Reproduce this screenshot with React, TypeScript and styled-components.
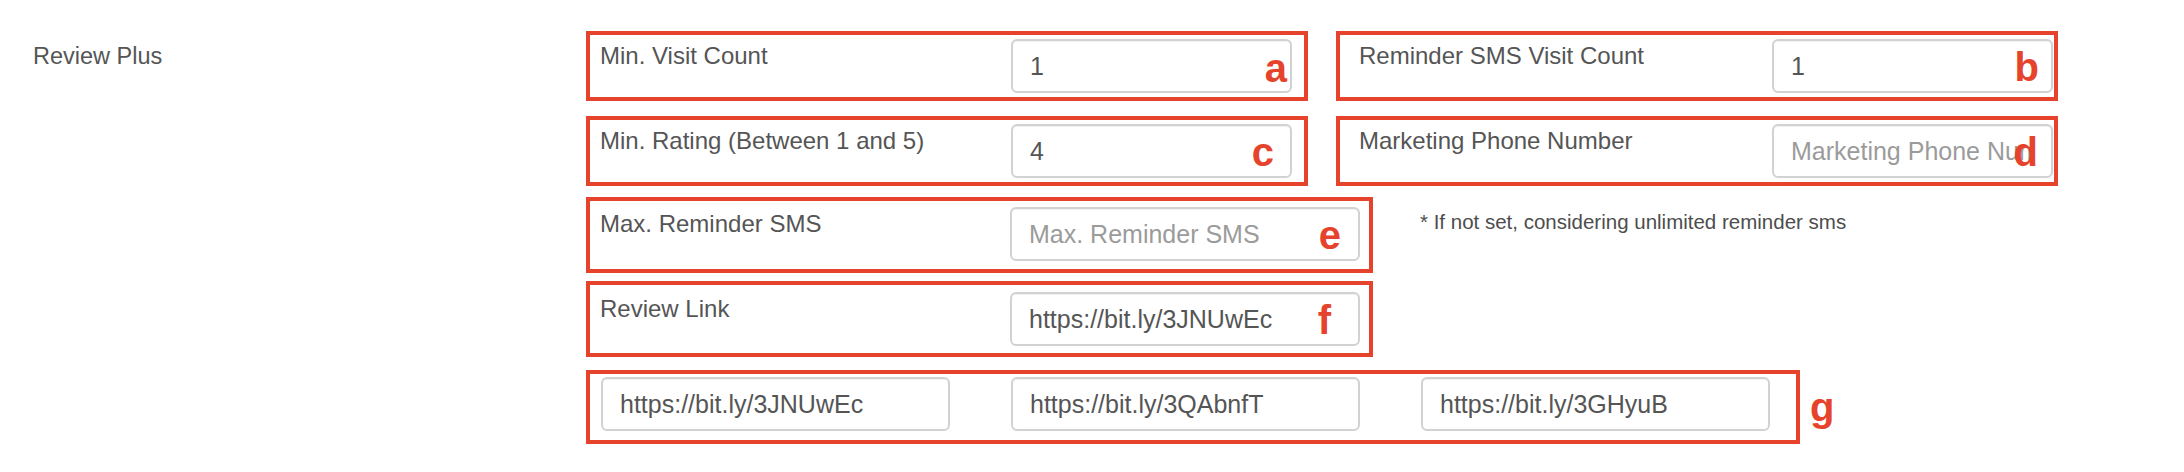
import React from "react";
import styled, { createGlobalStyle } from "styled-components";

const RED = "#e6432c";

const GlobalStyle = createGlobalStyle`
  html, body {
    margin: 0;
    padding: 0;
    background: #fff;
  }
  body {
    font-family: "Liberation Sans", Arial, Helvetica, sans-serif;
    color: #555;
  }
  * {
    box-sizing: border-box;
  }
`;

const Page = styled.div`
  display: flex;
  align-items: flex-start;
  width: 2184px;
  height: 472px;
`;

const SectionTitle = styled.div`
  width: 586px;
  flex-shrink: 0;
  padding: 42px 0 0 33px;
  font-size: 23.5px;
  line-height: 28px;
  color: #555;
`;

const Fields = styled.div`
  display: flex;
  flex-direction: column;
  padding-top: 31px;
`;

const Row = styled.div<{ $mt?: number }>`
  display: flex;
  align-items: flex-start;
  gap: 28px;
  margin-top: ${(p) => p.$mt ?? 0}px;
`;

/* red annotation frame round a form group */
const Box = styled.div<{ $w: number; $h: number; $pad: string }>`
  position: relative;
  display: flex;
  align-items: flex-start;
  flex-shrink: 0;
  width: ${(p) => p.$w}px;
  height: ${(p) => p.$h}px;
  padding: ${(p) => p.$pad};
  border: 4px solid ${RED};
`;

const Label = styled.div`
  flex: 1;
  margin-top: 3px;
  font-size: 24px;
  line-height: 28px;
  color: #555;
  white-space: nowrap;
`;

const Field = styled.input<{ $w: number }>`
  width: ${(p) => p.$w}px;
  height: 54px;
  flex-shrink: 0;
  padding: 0 17px;
  border: 2px solid #d2d2d2;
  border-radius: 6px;
  background: #fff;
  box-shadow: inset 0 1px 1px rgba(0, 0, 0, 0.06);
  font-family: "Liberation Sans", Arial, Helvetica, sans-serif;
  font-size: 25px;
  color: #555;
  outline: none;

  &::placeholder {
    color: #9b9b9b;
  }
`;

const FieldGroup = styled.div`
  display: flex;
  gap: 61px;
`;

const Marker = styled.span<{ $right?: number; $left?: string; $bottom: number }>`
  position: absolute;
  ${(p) => (p.$left ? `left: ${p.$left};` : `right: ${p.$right ?? 0}px;`)}
  bottom: ${(p) => p.$bottom}px;
  font-family: "Liberation Sans", Arial, Helvetica, sans-serif;
  font-weight: 700;
  font-size: 40px;
  line-height: 1;
  color: ${RED};
  pointer-events: none;
`;

const Note = styled.div`
  margin: 13px 0 0 19px;
  font-size: 20.5px;
  line-height: 24px;
  color: #4d4d4d;
  white-space: nowrap;
`;

const App: React.FC = () => {
  return (
    <>
      <GlobalStyle />
      <Page>
        <SectionTitle>Review Plus</SectionTitle>
        <Fields>
          <Row>
            <Box $w={722} $h={70} $pad="4px 12px 4px 10px">
              <Label>Min. Visit Count</Label>
              <Field $w={281} defaultValue="1" />
              <Marker $right={17} $bottom={9}>a</Marker>
            </Box>
            <Box $w={722} $h={70} $pad="4px 1px 4px 19px">
              <Label>Reminder SMS Visit Count</Label>
              <Field $w={281} defaultValue="1" />
              <Marker $right={15} $bottom={10}>b</Marker>
            </Box>
          </Row>
          <Row $mt={15}>
            <Box $w={722} $h={70} $pad="4px 12px 4px 10px">
              <Label>Min. Rating (Between 1 and 5)</Label>
              <Field $w={281} defaultValue="4" />
              <Marker $right={30} $bottom={10}>c</Marker>
            </Box>
            <Box $w={722} $h={70} $pad="4px 1px 4px 19px">
              <Label>Marketing Phone Number</Label>
              <Field $w={281} placeholder="Marketing Phone Number" />
              <Marker $right={16} $bottom={10}>d</Marker>
            </Box>
          </Row>
          <Row $mt={11}>
            <Box $w={787} $h={76} $pad="6px 9px 0 10px">
              <Label>Max. Reminder SMS</Label>
              <Field $w={350} placeholder="Max. Reminder SMS" />
              <Marker $right={28} $bottom={14}>e</Marker>
            </Box>
            <Note>* If not set, considering unlimited reminder sms</Note>
          </Row>
          <Row $mt={8}>
            <Box $w={787} $h={76} $pad="7px 9px 0 10px">
              <Label>Review Link</Label>
              <Field $w={350} defaultValue="https://bit.ly/3JNUwEc" />
              <Marker $right={38} $bottom={13}>f</Marker>
            </Box>
          </Row>
          <Row $mt={13}>
            <Box $w={1214} $h={74} $pad="3px 0 0 11px">
              <FieldGroup>
                <Field $w={349} defaultValue="https://bit.ly/3JNUwEc" />
                <Field $w={349} defaultValue="https://bit.ly/3QAbnfT" />
                <Field $w={349} defaultValue="https://bit.ly/3GHyuB" />
              </FieldGroup>
              <Marker $left="calc(100% + 14px)" $bottom={13}>g</Marker>
            </Box>
          </Row>
        </Fields>
      </Page>
    </>
  );
};

export default App;
